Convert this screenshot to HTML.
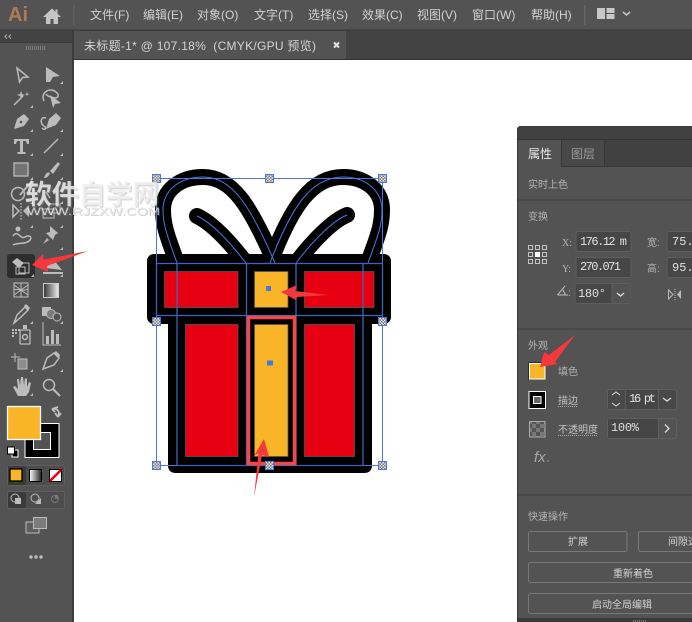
<!DOCTYPE html>
<html><head><meta charset="utf-8"><style>
html,body{margin:0;padding:0;background:#fff;width:692px;height:622px;overflow:hidden}
svg{display:block}
text{font-family:"Liberation Sans","Noto Sans CJK SC",sans-serif}
.m{font-size:12px;fill:#d2d2d2}
.p{font-size:10px;fill:#b4b4b4;font-family:"Liberation Sans","WenQuanYi Zen Hei",sans-serif}
.v{font-size:12px;fill:#e0e0e0;font-family:"Liberation Mono","Noto Sans CJK SC",monospace}
.i{fill:#bcbcbc}
.s{fill:none;stroke:#bcbcbc;stroke-width:1.5}
.b{fill:none;stroke:#787878;stroke-width:1}
</style></head><body>
<svg width="692" height="622" viewBox="0 0 692 622" xmlns="http://www.w3.org/2000/svg">
<rect width="692" height="622" fill="#fff"/>
<rect width="692" height="30" fill="#535353"/>
<rect y="30" width="692" height="30" fill="#434343"/>
<rect y="29.500" width="692" height="1" fill="#3a3a3a"/>
<rect y="59" width="692" height="1" fill="#333"/>
<text x="8" y="21" style="font-size:20px;font-weight:bold" fill="#b07a55">Ai</text>
<path d="M52 8.500 L43 17 H46 V24 H50.500 V19 H53.500 V24 H58 V17 H61 L57.500 13.600 V9.500 H55.500 V11.700 Z" fill="#c4c4c4"/>
<rect x="73" y="5" width="1.500" height="20" fill="#5f5f5f"/>
<text class="m" x="90" y="19">文件(F)</text>
<text class="m" x="143" y="19">编辑(E)</text>
<text class="m" x="197" y="19">对象(O)</text>
<text class="m" x="254" y="19">文字(T)</text>
<text class="m" x="308" y="19">选择(S)</text>
<text class="m" x="362" y="19">效果(C)</text>
<text class="m" x="417" y="19">视图(V)</text>
<text class="m" x="472" y="19">窗口(W)</text>
<text class="m" x="531" y="19">帮助(H)</text>
<rect x="584" y="5" width="1.500" height="20" fill="#666"/>
<rect x="597" y="8" width="8" height="11" fill="#c8c8c8"/><rect x="606.500" y="8" width="8" height="5" fill="#c8c8c8"/><rect x="606.500" y="14" width="8" height="5" fill="#c8c8c8"/>
<path d="M623 12 L626.500 15 L630 12" fill="none" stroke="#c8c8c8" stroke-width="1.500"/>
<rect y="31" width="72" height="591" fill="#535353"/>
<rect y="31" width="72" height="11" fill="#434343"/>
<rect y="42" width="72" height="1" fill="#3a3a3a"/>
<rect x="72" y="30" width="2" height="592" fill="#3c3c3c"/>
<path d="M7 34.500 L5 36.500 L7 38.500 M11 34.500 L9 36.500 L11 38.500" fill="none" stroke="#aaa"/>
<path d="M26.500 46v4M28.500 46v4M30.500 46v4M32.500 46v4M34.500 46v4M36.500 46v4M38.500 46v4M40.500 46v4M42.500 46v4M44.500 46v4" stroke="#7a7a7a" stroke-width="1"/>
<rect x="74" y="31" width="272" height="28" fill="#535353"/>
<text x="84" y="50" textLength="232" style="font-size:12px" fill="#d4d4d4" xml:space="preserve">未标题-1* @ 107.18%  (CMYK/GPU 预览)</text>
<path d="M334 42.500 L339 47.500 M339 42.500 L334 47.500" stroke="#e4e4e4" stroke-width="2"/>
<!-- tools -->
<path class="s" d="M17 68 L28 77 L22.500 77.500 L19.500 82 Z"/>
<path class="i" d="M46 67 L60 76 L53 77 L50 82 L46 82 Z"/>
<path class="s" d="M14 105 L23 96" stroke-width="2.500"/><path class="i" d="M21 91l1 3 3 1-3 1-1 3-1-3-3-1 3-1zM27 92l.6 1.500 1.500.6-1.500.6-.6 1.500-.6-1.500-1.500-.6 1.500-.6z"/>
<path class="s" d="M44 101 C40 92 50 87 56 92 C60 95 58 98 55 98 C52 98 47 96 46 94"/><path class="i" d="M50 95 L61 103 L55 104 L53 108 Z"/>
<path class="i" d="M14 129 L17 119 L24 114 L29 119 L24 126 Z"/><circle cx="21" cy="122" r="1.300" fill="#535353"/>
<path class="i" d="M46 129 L49 119 L56 113 L61 118 L56 125 Z"/><path class="s" d="M46 118 C40 116 40 124 44 126 C47 128 45 131 42 128"/>
<path class="i" d="M14 139 H29 V144 H27 L26 141 H23 V152 H25.500 V154 H17.500 V152 H20 V141 H17 L16 144 H14 Z"/>
<path d="M44 153 L58 139" stroke="#bcbcbc" stroke-width="1.500"/>
<rect x="14" y="163" width="14" height="13" fill="#737373" stroke="#bcbcbc" stroke-width="1.300"/>
<path class="i" d="M44 178 C46 172 48 172 50 173 C49 176 47 178 44 178 Z M50 171 L58 162 L60 164 L53 174 Z"/>
<circle cx="18" cy="194" r="6.500" class="s"/>
<path d="M20 195 L32 181" stroke="#bcbcbc" stroke-width="2"/>
<path class="s" d="M46 192 L50 198"/>
<path class="s" d="M13 205 L19 211 L13 217 Z"/><path d="M21 203 V220" stroke="#ddd" stroke-dasharray="1.500 1.500"/><path class="i" d="M29 205 L23 211 L29 217 Z"/>
<rect x="43" y="209" width="11" height="9" class="s" style="stroke-width:1"/><rect x="49" y="204" width="11" height="9" class="s" style="stroke-width:1"/>
<path class="s" d="M13 236 C18 229 20 240 25 237 C30 234 32 238 30 240 C26 245 18 242 13 245"/><circle cx="18" cy="229" r="2.500" class="i"/>
<path class="i" d="M50 226 L58 233 L55 235 L53 240 L46 233 L50 232 Z M47 238 L43 244 L49 240 Z"/>
<rect x="7" y="254" width="28" height="24" rx="3" fill="#2e2e2e"/>
<path class="i" d="M12 262 L17 258 L24 263 L19 268 Z"/><rect x="19" y="263" width="10" height="10" class="s" style="stroke-width:1"/><rect x="16" y="267" width="9" height="7" class="s" style="stroke-width:1"/>
<path class="i" d="M45 268 L53 259 L62 270 Z"/><rect x="43" y="272" width="20" height="2" fill="#bcbcbc"/>
<rect x="14" y="283" width="14" height="14" class="s" style="stroke-width:1"/><path d="M14 290 C18 288 24 292 28 289 M21 283 L21 297 M14 285 L28 295 M28 285 L14 295" stroke="#bcbcbc" fill="none"/>
<defs><linearGradient id="g"><stop offset="0" stop-color="#333"/><stop offset="1" stop-color="#eee"/></linearGradient>
<linearGradient id="g2"><stop offset="0" stop-color="#fff"/><stop offset="1" stop-color="#222"/></linearGradient>
<pattern id="ck" width="8" height="8" patternUnits="userSpaceOnUse"><rect width="8" height="8" fill="#777"/><rect width="4" height="4" fill="#555"/><rect x="4" y="4" width="4" height="4" fill="#555"/></pattern>
<pattern id="h" width="3" height="3" patternUnits="userSpaceOnUse"><rect width="3" height="3" fill="#e8e8e8"/><rect width="1.500" height="1.500" fill="#777"/><rect x="1.500" y="1.500" width="1.500" height="1.500" fill="#777"/></pattern></defs>
<rect x="43.500" y="283.500" width="15" height="14" fill="url(#g)" stroke="#ccc"/>
<path class="s" d="M14 323 L17 315 L25 307 L28 310 L20 318 Z"/><path class="i" d="M24 306 L26 304 L30 308 L28 311 Z"/>
<rect x="42" y="307" width="9" height="9" class="i"/><circle cx="51" cy="314" r="4.500" fill="#7a7a7a" stroke="#bcbcbc"/><circle cx="57" cy="317" r="4" fill="#535353" stroke="#bcbcbc"/>
<path class="i" d="M12 329h2v2h-2zM15 329h2v2h-2zM12 332h2v2h-2zM15 332h2v2h-2zM18 329h2v2h-2zM12 335h2v2h-2z"/><rect x="20" y="330" width="10" height="14" rx="1" class="s" style="stroke-width:1.300"/><rect x="23" y="325" width="4" height="4" class="i"/><circle cx="25" cy="337" r="2.500" class="s"/>
<path d="M43 322 V345 H61" fill="none" stroke="#bcbcbc"/><rect x="46" y="336" width="3" height="8" class="i"/><rect x="51" y="330" width="3" height="14" class="i"/><rect x="56" y="334" width="3" height="10" class="i"/>
<path d="M11 357 H20 M15 353 V362" stroke="#bcbcbc"/><path fill="#8d8d8d" stroke="#bcbcbc" d="M18 359 H27 V369 H18 Z"/>
<path class="s" d="M43 369 L47 358 L54 353 L59 358 L54 365 Z"/><path class="i" d="M54 353 L56 351 L60 355 L59 358 Z"/>
<path class="i" d="M18 396 L13 387 L15 386 L18 389 L17 379 L19 379 L20 385 L21 377 L23 377 L24 385 L25 378 L27 379 L27 387 L29 382 L31 383 L29 392 L26 396 Z"/>
<circle cx="49" cy="385" r="5.500" class="s"/><path d="M53 389 L60 396" stroke="#bcbcbc" stroke-width="2"/>
<g class="i"><path d="M63 84l-3 0 3-3zM33 108l-3 0 3-3zM33 132l-3 0 3-3zM63 132l-3 0 3-3zM33 156l-3 0 3-3zM63 156l-3 0 3-3zM33 180l-3 0 3-3zM63 180l-3 0 3-3zM33 204l-3 0 3-3zM63 204l-3 0 3-3zM33 228l-3 0 3-3zM63 228l-3 0 3-3zM63 250l-3 0 3-3zM34 277l-3 0 3-3zM63 277l-3 0 3-3zM33 324l-3 0 3-3zM63 324l-3 0 3-3zM33 372l-3 0 3-3zM63 372l-3 0 3-3zM33 396l-3 0 3-3z"/></g>
<rect x="25" y="423.500" width="34" height="34" fill="#000" stroke="#fff"/>
<rect x="33.500" y="432.500" width="17" height="17" fill="#535353" stroke="#fff" stroke-width="1"/>
<rect x="7.500" y="406.500" width="33" height="33" fill="#f9b428" stroke="#fff" stroke-width="1.300"/>
<path d="M52 409 L58 407 M52 409 L55 412 M52 409 C58 408 60 412 58 416 M58 417 L55 413 M58 417 L61 413" stroke="#c0c0c0" stroke-width="1.800" fill="none"/>
<rect x="12" y="450" width="6" height="7" fill="#000" stroke="#fff"/><rect x="7.500" y="447" width="7" height="7" fill="#fff" stroke="#000"/>
<rect x="7.500" y="465.500" width="57" height="20" rx="2" fill="#4d4d4d" stroke="#5e5e5e"/><rect x="8" y="466" width="18" height="19" fill="#3a3a3a"/>
<rect x="10" y="469" width="12" height="12" fill="#f9b428" stroke="#000" stroke-width="1.300"/>
<rect x="29.500" y="469.500" width="12" height="12" fill="url(#g2)" stroke="#000"/>
<rect x="49.500" y="469.500" width="12" height="12" fill="#fff" stroke="#000"/><path d="M50 481 L61 470" stroke="#e60012" stroke-width="2.500"/>
<rect x="7.500" y="491.500" width="57" height="17" rx="2" fill="#4d4d4d" stroke="#5e5e5e"/><rect x="8" y="492" width="18" height="16" rx="2" fill="#3a3a3a"/>
<circle cx="15" cy="498" r="4" class="s" style="stroke-width:1"/><rect x="15" y="498" width="6" height="6" class="i"/>
<circle cx="35" cy="498" r="4" class="s" style="stroke-width:1"/><path class="i" d="M35 504 H41 V498 Z"/>
<circle cx="55" cy="499" r="3.500" fill="none" stroke="#777"/><path d="M55 499 H58 V495 H55 Z" fill="#777"/>
<rect x="26" y="522" width="13" height="11" fill="#5e5e5e" stroke="#bcbcbc"/><rect x="33.500" y="517.500" width="13" height="11" fill="#7c7c7c" stroke="#bcbcbc"/>
<circle cx="31" cy="557" r="1.700" class="i"/><circle cx="36" cy="557" r="1.700" class="i"/><circle cx="41" cy="557" r="1.700" class="i"/>
<!-- gift -->
<g fill="none" stroke="#000" stroke-width="16" stroke-linejoin="round" stroke-linecap="round">
<path d="M177 263 C169 240 163 227 163 210 C163 190 180 177 203 177 C232 177 250 205 275 263"/>
<path d="M368 263 C376 240 382 228 382 210 C382 190 365 177 343 177 C312 177 292 205 270 263"/>
<path d="M197 216 C212 223 228 240 246 263"/>
<path d="M347 215 C332 221 312 242 296 263"/>
</g>
<rect x="147" y="254" width="244" height="70" rx="7" fill="#000"/>
<path d="M168 320 H372 V465 Q372 473 364 473 H176 Q168 473 168 465 Z" fill="#000"/>
<g stroke="#555" stroke-width=".8">
<rect x="164.500" y="271.500" width="73.500" height="36" fill="#e60012"/>
<rect x="254.500" y="271.500" width="33.500" height="36" fill="#f9b428"/>
<rect x="304.500" y="271.500" width="69.500" height="36" fill="#e60012"/>
<rect x="185.500" y="324.500" width="52.500" height="132" fill="#e60012"/>
<rect x="254.500" y="324.500" width="33.500" height="132" fill="#f9b428"/>
<rect x="304.500" y="324.500" width="50" height="132" fill="#e60012"/>
</g>
<g fill="none" stroke="#4c76e0" stroke-width="1">
<path d="M177 263 C169 240 163 227 163 210 C163 190 180 177 203 177 C232 177 250 205 275 263"/>
<path d="M368 263 C376 240 382 228 382 210 C382 190 365 177 343 177 C312 177 292 205 270 263"/>
<path d="M197 216 C212 223 228 240 246 263"/>
<path d="M347 215 C332 221 312 242 296 263"/>
<rect x="156.500" y="178.500" width="226" height="287"/>
</g>
<g fill="none" stroke="#3f63bd" stroke-width="1.300">
<rect x="156.500" y="263.500" width="226" height="52"/>
<path d="M177 263 V465.500 H363 V263 M246.500 263 V465 M296 263 V465"/>
</g>
<rect x="248.500" y="317.500" width="46" height="146" fill="none" stroke="#f4474a" stroke-width="3.500"/>
<rect x="266" y="286" width="5" height="5" fill="#4c76e0"/><rect x="267" y="360.500" width="6" height="5" fill="#4c76e0"/>
<g fill="url(#h)" stroke="#4c76e0" stroke-width="1">
<rect x="152.500" y="174.500" width="8" height="8"/><rect x="265.500" y="174.500" width="8" height="8"/><rect x="378.500" y="174.500" width="8" height="8"/>
<rect x="152.500" y="317.500" width="8" height="8"/><rect x="378.500" y="317.500" width="8" height="8"/>
<rect x="152.500" y="461.500" width="8" height="8"/><rect x="265.500" y="461.500" width="8" height="8"/><rect x="378.500" y="461.500" width="8" height="8"/>
</g>
<!-- panel -->
<path d="M517 622 V130 Q517 126 521 126 H692 V622 Z" fill="#535353"/>
<path d="M517.500 622 V130 Q517.500 126.500 521 126.500 H692" fill="none" stroke="#3a3a3a"/>
<rect x="518" y="127" width="174" height="40" fill="#414141"/>
<rect x="518" y="139" width="174" height="1" fill="#353535"/>
<rect x="518" y="166" width="174" height="1" fill="#383838"/>
<rect x="518" y="140" width="43" height="27" fill="#535353"/>
<rect x="561" y="140" width="44" height="26" fill="#484848"/>
<rect x="561" y="140" width="1" height="27" fill="#383838"/><rect x="604" y="140" width="1" height="26" fill="#383838"/>
<text x="528" y="158" style="font-size:12px" fill="#e8e8e8">属性</text>
<text x="571" y="158" style="font-size:12px" fill="#9a9a9a">图层</text>
<text class="p" x="528" y="188">实时上色</text>
<rect x="518" y="199" width="174" height="2" fill="#484848"/>
<text class="p" x="528" y="220">变换</text>
<g fill="none" stroke="#c4c4c4"><rect x="528.500" y="245.500" width="4" height="4"/><rect x="535.500" y="245.500" width="4" height="4"/><rect x="542.500" y="245.500" width="4" height="4"/><rect x="528.500" y="252.500" width="4" height="4"/><rect x="542.500" y="252.500" width="4" height="4"/><rect x="528.500" y="259.500" width="4" height="4"/><rect x="535.500" y="259.500" width="4" height="4"/><rect x="542.500" y="259.500" width="4" height="4"/></g>
<rect x="535" y="252" width="5" height="5" fill="#fff"/>
<text class="p" x="562" y="246" style="font-family:'Liberation Serif',serif">X:</text>
<text class="p" x="562" y="272" style="font-family:'Liberation Serif',serif">Y:</text>
<path d="M557.500 295 L565 286 M557.500 295 H568 M563 290 L565.500 295" stroke="#bcbcbc" fill="none"/><text class="p" x="568" y="296">:</text>
<g fill="#464646" stroke="#5e5e5e">
<rect x="576" y="231.500" width="55" height="20" rx="2"/>
<rect x="576" y="257.500" width="55" height="20" rx="2"/>
<rect x="575" y="283.500" width="55" height="20" rx="2"/>
<rect x="667" y="231.500" width="40" height="20" rx="2"/>
<rect x="667" y="257.500" width="40" height="20" rx="2"/>
</g>
<rect x="612" y="284" width="18" height="19" fill="#535353"/><path d="M612 284 V303" stroke="#5e5e5e"/>
<path d="M617 293 L620.500 296 L624 293" fill="none" stroke="#ddd" stroke-width="1.300"/>
<text class="v" x="580" y="245" textLength="47">176.12 m</text>
<text class="v" x="580" y="270" textLength="41">270.071</text>
<text class="v" x="578" y="297" textLength="28">180°</text>
<text class="p" x="647" y="246">宽:</text>
<text class="p" x="647" y="272">高:</text>
<text class="v" x="672" y="245">75.9</text>
<text class="v" x="672" y="271">95.9</text>
<path d="M668.500 290 L673 294.500 L668.500 299 Z" fill="none" stroke="#bcbcbc"/><path d="M675 289 V300" stroke="#bcbcbc" stroke-dasharray="1 1"/><path d="M681 290 L677 294.500 L681 299 Z" fill="#bcbcbc"/>
<rect x="518" y="328" width="174" height="2" fill="#484848"/>
<text class="p" x="528" y="349">外观</text>
<rect x="529" y="363" width="16" height="16" fill="#f9b428" stroke="#000"/><rect x="529.500" y="363.500" width="15.500" height="15.500" fill="none" stroke="#fff"/>
<text class="p" x="558" y="375">填色</text>
<rect x="529" y="391.500" width="16.500" height="17" fill="#000" stroke="#fff" stroke-width="1"/><rect x="533.500" y="396.500" width="7.500" height="7" fill="#666" stroke="#fff" stroke-width="1"/>
<text class="p" x="558" y="404" style="fill:#c4c4c4">描边</text><path d="M558 406.500 H578" stroke="#aaa" stroke-dasharray="1 1"/>
<rect x="607.500" y="389.500" width="69" height="20" rx="2" fill="#484848" stroke="#5e5e5e"/><rect x="625.500" y="390" width="33" height="19" fill="#454545"/>
<text class="v" x="629" y="402" textLength="27">16 pt</text>
<path d="M625.500 390 V409 M658.500 390 V409" stroke="#5e5e5e"/>
<path d="M612 395 L616 392 L620 395 M612 403 L616 406 L620 403" fill="none" stroke="#ddd"/>
<path d="M663 398 L667 401 L671 398" fill="none" stroke="#ddd" stroke-width="1.300"/>
<rect x="529.500" y="421.500" width="15.500" height="15.500" fill="url(#ck)" stroke="#aaa"/>
<text class="p" x="558" y="433" style="fill:#c4c4c4">不透明度</text><path d="M558 435.500 H598" stroke="#aaa" stroke-dasharray="1 1"/>
<rect x="607.500" y="418.500" width="69" height="20" rx="2" fill="#535353" stroke="#5e5e5e"/><rect x="608" y="419" width="50" height="19" fill="#454545"/>
<path d="M658.500 419 V438" stroke="#5e5e5e"/><path d="M665 424.500 L669 428.500 L665 432.500" fill="none" stroke="#ddd" stroke-width="1.300"/>
<text class="v" x="611" y="431" textLength="28">100%</text>
<text x="534" y="462" style="font-style:italic;font-size:15px" fill="#a8a8a8">fx</text><path d="M547 461 h2" stroke="#999"/>
<rect x="518" y="494" width="174" height="2" fill="#484848"/>
<text class="p" x="528" y="520">快速操作</text>
<rect class="b" x="528.500" y="531.500" width="98.500" height="20" rx="2"/>
<rect class="b" x="638.500" y="531.500" width="70" height="20" rx="2"/>
<rect class="b" x="528.500" y="562.500" width="180" height="20" rx="2"/>
<rect class="b" x="528.500" y="593.500" width="180" height="20" rx="2"/>
<text class="p" x="568" y="545" style="fill:#d4d4d4">扩展</text>
<text class="p" x="668" y="545" style="fill:#d4d4d4">间隙选项</text>
<text class="p" x="613" y="577" style="fill:#d4d4d4">重新着色</text>
<text class="p" x="592" y="608" style="fill:#d4d4d4">启动全局编辑</text>
<rect x="518" y="618" width="174" height="4" fill="#3a3a3a"/>
<path d="M633.500 620v2M635.500 620v2M637.500 620v2M639.500 620v2M641.500 620v2M643.500 620v2M645.500 620v2" stroke="#777"/>
<g fill="#f4383c">
<path d="M32 265 L43 254 L44 259.500 L88 251 L47 266 L48 272 Z"/>
<path d="M281 292 L297 285 L295 291 L328 295 L297 297 L296 300 Z"/>
<path d="M264 439 L254 456 L258.500 453 L254 497 L262 455 L269 457 Z"/>
<path d="M540 367 L544 352 L549 355 L575 335 L555 362 L558 364 Z"/>
</g>
<!-- watermark -->
<g>
<text x="26.500" y="205.500" textLength="134" lengthAdjust="spacingAndGlyphs" style="font-size:27px;font-weight:bold" fill="#8a8a8a" opacity=".3">软件自学网</text>
<text x="25" y="204" textLength="134" lengthAdjust="spacingAndGlyphs" style="font-size:27px;font-weight:bold" fill="#f0f0f0" opacity=".85">软件自学网</text>
<text x="28" y="216" textLength="133" lengthAdjust="spacingAndGlyphs" style="font-size:11px" fill="#8a8a8a" opacity=".4">WWW.RJZXW.COM</text>
<text x="27" y="215" textLength="133" lengthAdjust="spacingAndGlyphs" style="font-size:11px" fill="#e8e8e8" opacity=".85">WWW.RJZXW.COM</text>
</g>
</svg>
</body></html>
